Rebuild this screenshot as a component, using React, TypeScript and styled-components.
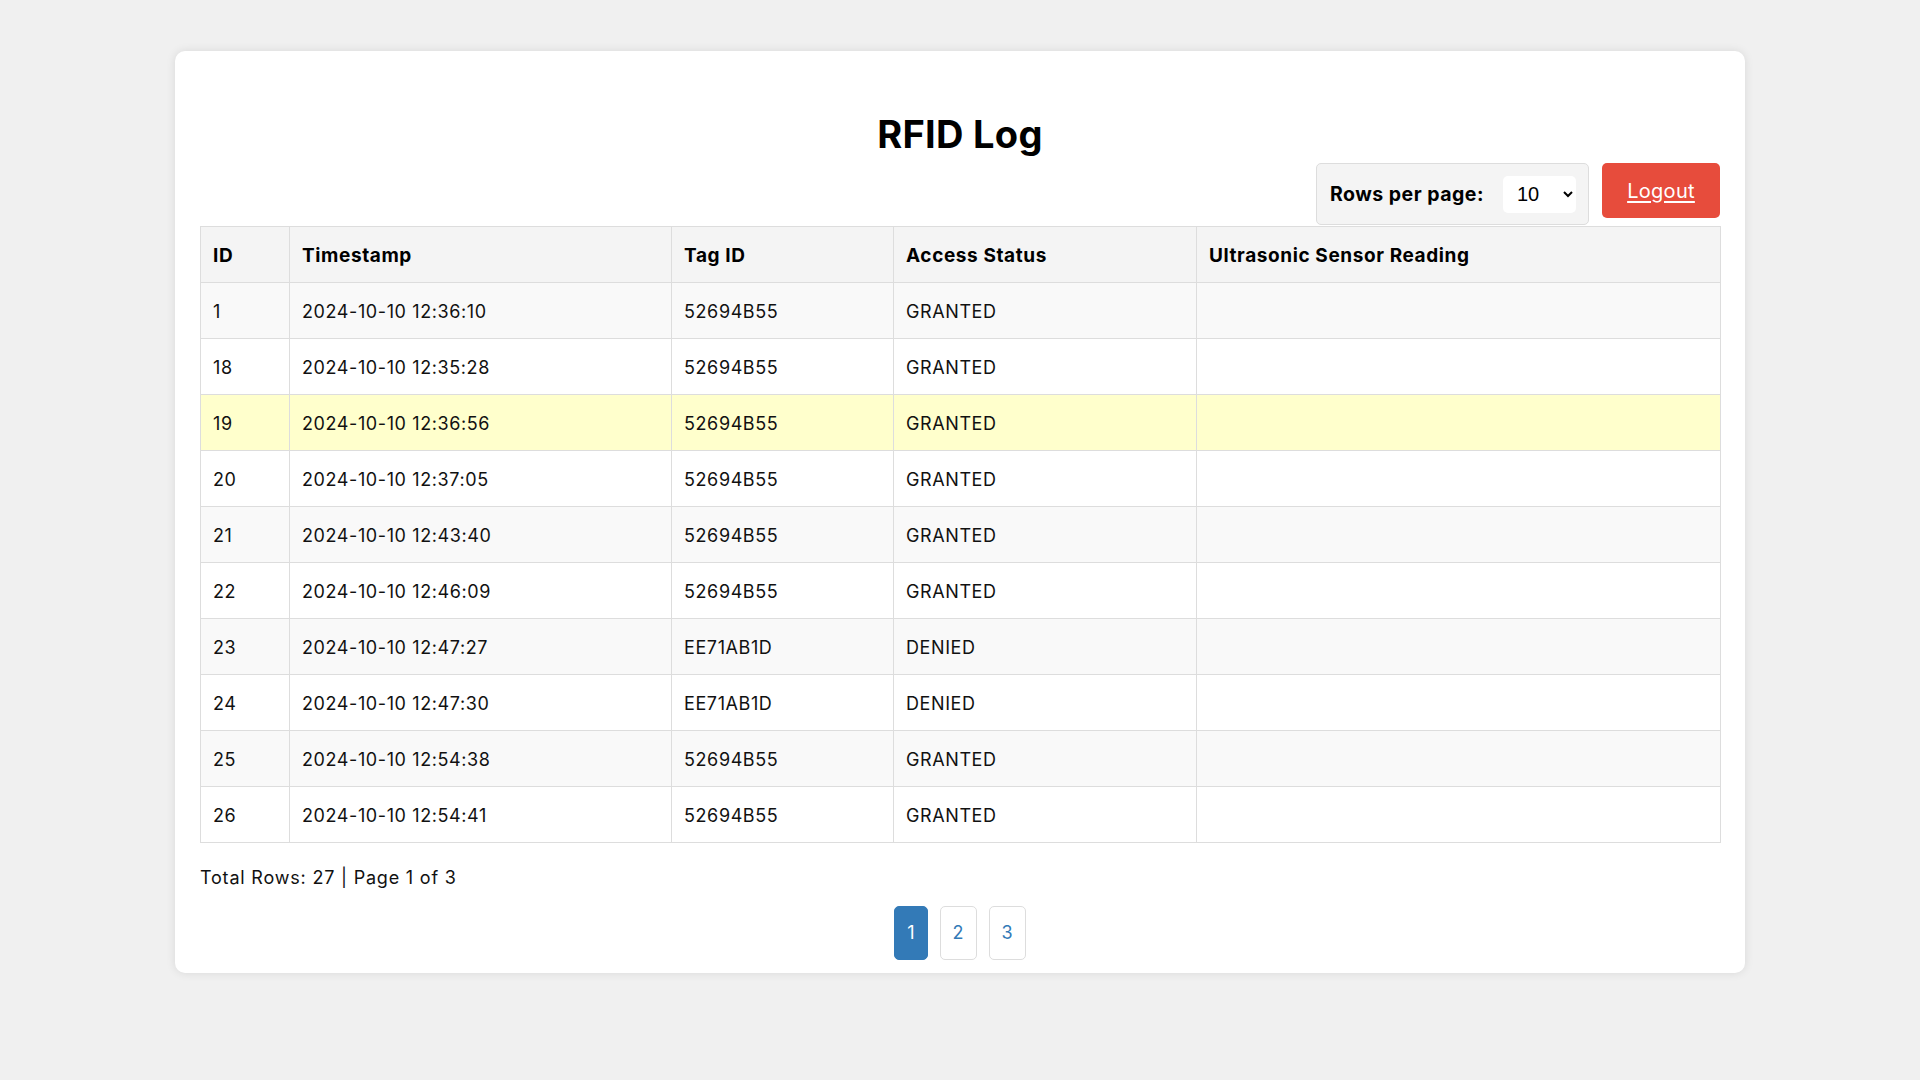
import React from "react";
import styled, { createGlobalStyle } from "styled-components";

const GlobalStyle = createGlobalStyle`
  html, body { margin: 0; padding: 0; }
  body {
    background: #f0f0f0;
    font-family: Inter, "Noto Sans", sans-serif;
    color: #000;
  }
`;

const Page = styled.div`
  padding: 51px 0 40px;
`;

const Card = styled.div`
  width: 1570px;
  box-sizing: border-box;
  margin: 0 auto;
  background: #fff;
  border-radius: 10px;
  box-shadow: 0 0 10px rgba(0, 0, 0, 0.1);
  padding: 59px 25px 13px;
`;

const Title = styled.h1`
  margin: 0 0 5px;
  font-size: 38px;
  line-height: 48px;
  font-weight: 700;
  letter-spacing: 0.3px;
  text-align: center;
`;

const Controls = styled.div`
  display: flex;
  justify-content: flex-end;
  align-items: flex-start;
  gap: 13px;
  margin-bottom: 1px;
`;

const RowsBox = styled.div`
  display: flex;
  align-items: center;
  gap: 19px;
  height: 62px;
  box-sizing: border-box;
  padding: 0 12px 0 13px;
  background: #f4f4f4;
  border: 1px solid #ddd;
  border-radius: 5px;
`;

const RowsLabel = styled.label`
  font-size: 19.5px;
  letter-spacing: 0.5px;
  font-weight: 700;
`;

const Select = styled.select`
  width: 73px;
  height: 37px;
  border: none;
  border-radius: 5px;
  background: #fff;
  font-family: "Liberation Sans", Arial, sans-serif;
  font-size: 20px;
  padding: 0 8px 0 10px;
  color: #000;
`;

const LogoutButton = styled.a`
  display: flex;
  align-items: center;
  justify-content: center;
  width: 118px;
  height: 55px;
  box-sizing: border-box;
  background: #e74c3c;
  color: #fff;
  border-radius: 5px;
  font-size: 20px;
  letter-spacing: 0.3px;
  text-decoration: underline;
  text-underline-offset: 3px;
  cursor: pointer;
`;

const Table = styled.table`
  width: 100%;
  border-collapse: collapse;
  table-layout: fixed;
`;

const Th = styled.th`
  text-align: left;
  background: #f4f4f4;
  border: 1px solid #ddd;
  padding: 16px 12px 14px;
  line-height: 25px;
  font-size: 19px;
  letter-spacing: 0.6px;
  font-weight: 700;
`;

const Tr = styled.tr<{ $highlight?: boolean }>`
  background: ${(p) => (p.$highlight ? "#ffffcc" : "#fff")};
  &:nth-child(odd) {
    background: ${(p) => (p.$highlight ? "#ffffcc" : "#f9f9f9")};
  }
`;

const Td = styled.td`
  border: 1px solid #ddd;
  padding: 16px 12px 14px;
  line-height: 25px;
  font-size: 18px;
  letter-spacing: 0.6px;
  height: 25px;
  color: #111;
`;

const Footer = styled.div`
  margin-top: 23px;
  font-size: 18px;
  letter-spacing: 0.8px;
  line-height: 24px;
  color: #111;
`;

const Pagination = styled.div`
  display: flex;
  justify-content: center;
  gap: 12px;
  margin-top: 16px;
`;

const PageBtn = styled.button<{ $active?: boolean }>`
  box-sizing: border-box;
  height: 54px;
  padding: 0 12px;
  font-family: inherit;
  font-size: 18px;
  line-height: 24px;
  border-radius: 5px;
  border: 1px solid ${(p) => (p.$active ? "#337ab7" : "#ddd")};
  background: ${(p) => (p.$active ? "#337ab7" : "#fff")};
  color: ${(p) => (p.$active ? "#fff" : "#337ab7")};
  cursor: pointer;
`;

const rows = [
  { id: 1, ts: "2024-10-10 12:36:10", tag: "52694B55", status: "GRANTED" },
  { id: 18, ts: "2024-10-10 12:35:28", tag: "52694B55", status: "GRANTED" },
  { id: 19, ts: "2024-10-10 12:36:56", tag: "52694B55", status: "GRANTED", hl: true },
  { id: 20, ts: "2024-10-10 12:37:05", tag: "52694B55", status: "GRANTED" },
  { id: 21, ts: "2024-10-10 12:43:40", tag: "52694B55", status: "GRANTED" },
  { id: 22, ts: "2024-10-10 12:46:09", tag: "52694B55", status: "GRANTED" },
  { id: 23, ts: "2024-10-10 12:47:27", tag: "EE71AB1D", status: "DENIED" },
  { id: 24, ts: "2024-10-10 12:47:30", tag: "EE71AB1D", status: "DENIED" },
  { id: 25, ts: "2024-10-10 12:54:38", tag: "52694B55", status: "GRANTED" },
  { id: 26, ts: "2024-10-10 12:54:41", tag: "52694B55", status: "GRANTED" },
];

export default function App() {
  return (
    <Page>
      <GlobalStyle />
      <Card>
        <Title>RFID Log</Title>
        <Controls>
          <RowsBox>
            <RowsLabel htmlFor="rows">Rows per page:</RowsLabel>
            <Select id="rows" defaultValue="10">
              <option value="10">10</option>
              <option value="20">20</option>
              <option value="50">50</option>
            </Select>
          </RowsBox>
          <LogoutButton>Logout</LogoutButton>
        </Controls>
        <Table>
          <colgroup>
            <col style={{ width: 89 }} />
            <col style={{ width: 382 }} />
            <col style={{ width: 222 }} />
            <col style={{ width: 303 }} />
            <col style={{ width: 524 }} />
          </colgroup>
          <thead>
            <tr>
              <Th>ID</Th>
              <Th>Timestamp</Th>
              <Th>Tag ID</Th>
              <Th>Access Status</Th>
              <Th>Ultrasonic Sensor Reading</Th>
            </tr>
          </thead>
          <tbody>
            {rows.map((r) => (
              <Tr key={r.id} $highlight={r.hl}>
                <Td>{r.id}</Td>
                <Td>{r.ts}</Td>
                <Td>{r.tag}</Td>
                <Td>{r.status}</Td>
                <Td></Td>
              </Tr>
            ))}
          </tbody>
        </Table>
        <Footer>Total Rows: 27 | Page 1 of 3</Footer>
        <Pagination>
          <PageBtn $active>1</PageBtn>
          <PageBtn>2</PageBtn>
          <PageBtn>3</PageBtn>
        </Pagination>
      </Card>
    </Page>
  );
}
